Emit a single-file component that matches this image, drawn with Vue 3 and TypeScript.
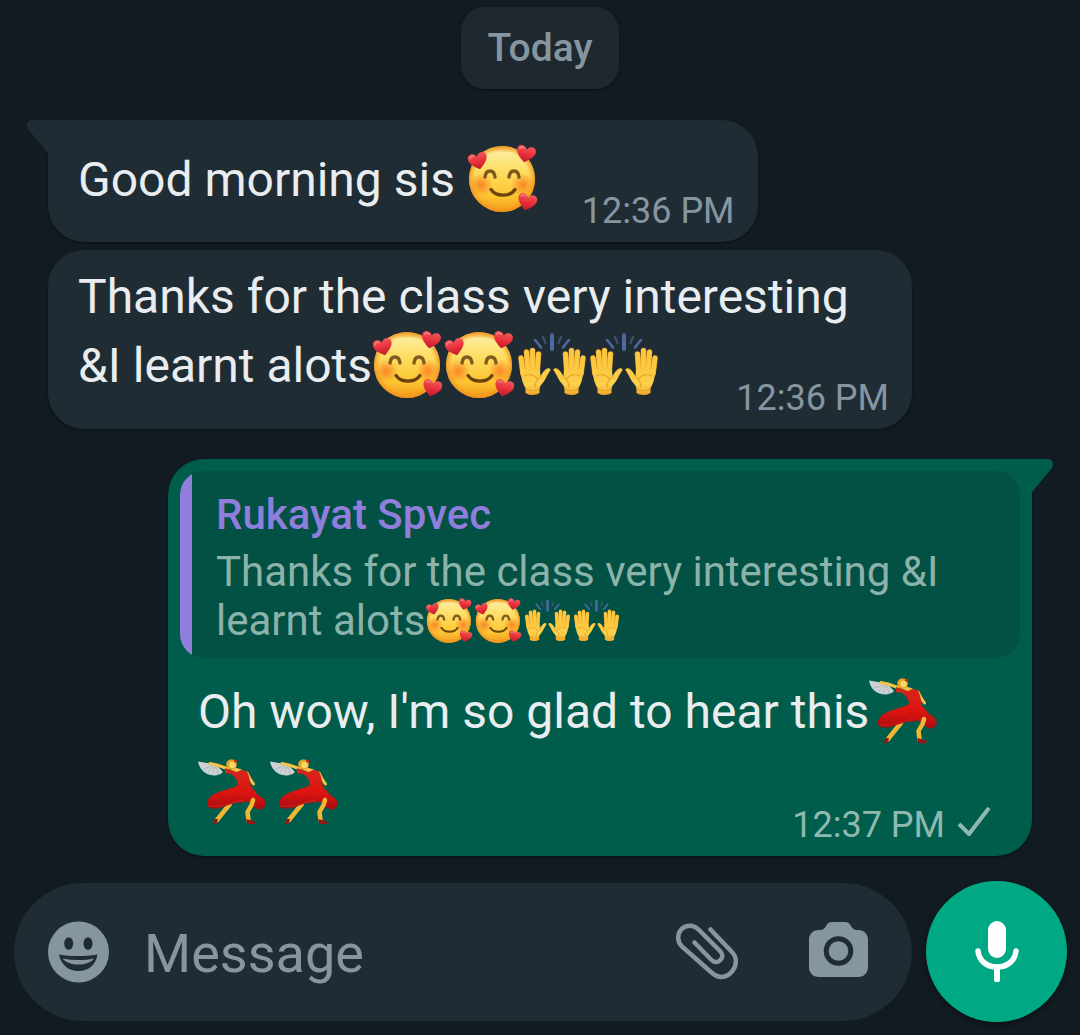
<script setup lang="ts">
import { ref } from 'vue'

type EmojiName = 'hearts' | 'hands' | 'dancer'

interface Message {
  id: number
  sent: boolean
  tail: boolean
  text: string
  emojis: EmojiName[]
  time: string
  quote?: { author: string; text: string; emojis: EmojiName[] }
}

const labels: Record<EmojiName, string> = {
  hearts: 'smiling face with hearts',
  hands: 'raising hands',
  dancer: 'woman dancing',
}

const messages: Message[] = [
  { id: 1, sent: false, tail: true, text: 'Good morning sis ', emojis: ['hearts'], time: '12:36 PM' },
  {
    id: 2,
    sent: false,
    tail: false,
    text: 'Thanks for the class very interesting &I learnt alots',
    emojis: ['hearts', 'hearts', 'hands', 'hands'],
    time: '12:36 PM',
  },
  {
    id: 3,
    sent: true,
    tail: true,
    text: "Oh wow, I'm so glad to hear this",
    emojis: ['dancer', 'dancer', 'dancer'],
    time: '12:37 PM',
    quote: {
      author: 'Rukayat Spvec',
      text: 'Thanks for the class very interesting &I learnt alots',
      emojis: ['hearts', 'hearts', 'hands', 'hands'],
    },
  },
]

const draft = ref('')
</script>

<template>
  <div class="chat">
    <svg class="defs" width="0" height="0" aria-hidden="true">
      <defs>
        <linearGradient id="skin" x1="0" y1="0" x2="0" y2="1">
          <stop offset="0" stop-color="#f9b83c" />
          <stop offset="0.1" stop-color="#fdeb9a" />
          <stop offset="0.35" stop-color="#fddf66" />
          <stop offset="0.75" stop-color="#fcc631" />
          <stop offset="1" stop-color="#f39a20" />
        </linearGradient>
        <radialGradient id="rim">
          <stop offset="0.82" stop-color="#f59b1e" stop-opacity="0" />
          <stop offset="1" stop-color="#f08c1a" stop-opacity="0.8" />
        </radialGradient>
        <radialGradient id="cheek">
          <stop offset="0" stop-color="#f9741c" stop-opacity="0.8" />
          <stop offset="1" stop-color="#f9741c" stop-opacity="0" />
        </radialGradient>
        <linearGradient id="heart-red" x1="0" y1="0" x2="0" y2="1">
          <stop offset="0" stop-color="#f2595c" />
          <stop offset="0.5" stop-color="#e8303a" />
          <stop offset="1" stop-color="#c01a2c" />
        </linearGradient>
        <linearGradient id="palm" x1="0" y1="0" x2="0" y2="1">
          <stop offset="0" stop-color="#fbc740" />
          <stop offset="0.6" stop-color="#fdd04a" />
          <stop offset="1" stop-color="#f0a72a" />
        </linearGradient>
        <linearGradient id="dress" x1="0" y1="0" x2="0" y2="1">
          <stop offset="0" stop-color="#d4281c" />
          <stop offset="0.6" stop-color="#dc1410" />
          <stop offset="1" stop-color="#a80c10" />
        </linearGradient>
      </defs>
      <symbol id="heart" viewBox="0 0 20 18">
        <path d="M10 17.500C6 14.500 0.500 10.500 0.500 5.500C0.500 0 8 -0.500 10 4.500C12 -0.500 19.500 0 19.500 5.500C19.500 10.500 14 14.500 10 17.500Z" fill="url(#heart-red)" />
        <path d="M3 5C3.500 3 5.500 2.500 7 3.500" fill="none" stroke="#f78a88" stroke-width="1.200" stroke-linecap="round" />
      </symbol>
      <symbol id="emoji-hearts" viewBox="0 0 72 72">
        <circle cx="35" cy="36" r="33" fill="url(#skin)" />
        <circle cx="35" cy="36" r="33" fill="url(#rim)" />
        <circle cx="14" cy="42" r="12" fill="url(#cheek)" />
        <circle cx="56" cy="42" r="12" fill="url(#cheek)" />
        <path d="M18 34C19 26 27 26 28 34M42 34C43 26 51 26 52 34" fill="none" stroke="#80591f" stroke-width="3.400" stroke-linecap="round" />
        <path d="M24 46.500C29 54 43 54 48 46.500" fill="none" stroke="#6b4210" stroke-width="3.200" stroke-linecap="round" />
        <use href="#heart" x="1" y="9" width="20" height="18" transform="rotate(-14 11 18)" />
        <use href="#heart" x="49" y="2" width="20" height="18" transform="rotate(12 59 10)" />
        <use href="#heart" x="50" y="50" width="20" height="18" transform="rotate(14 60 59)" />
      </symbol>
      <symbol id="hand" viewBox="0 0 36 72">
        <path d="M5 29L7 45M10.500 23L12 44M16.500 21.500V44M22.500 25L21 45" fill="none" stroke="#e09c22" stroke-width="5.600" stroke-linecap="round" />
        <path d="M5 29L7 45M10.500 23L12 44M16.500 21.500V44M22.500 25L21 45" fill="none" stroke="#fcc842" stroke-width="4.600" stroke-linecap="round" />
        <path d="M4.500 40L24 40L24.500 47C26 45 28 41 31 39.500C33.500 38.500 35.500 40 34 42C31 46 29 52 25.500 55.500C24.500 57 23.500 58 23.500 60L23.500 64C20 66.500 12.500 66.500 9.500 64L9.500 59C7 55 5 50 4.500 40Z" fill="url(#palm)" />
        <path d="M8 47C12 45 18 45 22 50M19 58C19 53 21 50 25 48M10 60C14 62 20 62 23 60" fill="none" stroke="#e5a52b" stroke-width="1.200" stroke-linecap="round" />
      </symbol>
      <symbol id="emoji-hands" viewBox="0 0 72 72">
        <g fill="none" stroke="#4c689f" stroke-linecap="round">
          <path d="M36 6V20" stroke-width="4" />
          <path d="M19 11L25 18.500M53 11L47 18.500" stroke-width="2.600" />
          <path d="M27 8L29.500 14M45 8L42.500 14" stroke="#3c5275" stroke-width="2" />
        </g>
        <use href="#hand" width="36" height="72" />
        <use href="#hand" width="36" height="72" transform="translate(72 0) scale(-1 1)" />
      </symbol>
      <symbol id="emoji-dancer" viewBox="0 0 72 72">
        <path d="M0 5.500L18 8.500L25 16C22 19.500 15 20.500 9 18C4 15.500 1 11 0 5.500Z" fill="#ccd2d4" />
        <path d="M18 9L5 13M18 9L9 17M18 9L14 19M18 9L20 19" stroke="#a9b1b5" stroke-width="0.700" />
        <path d="M12 7.500L19 9L29 12.500" fill="none" stroke="#f5c144" stroke-width="3" stroke-linecap="round" stroke-linejoin="round" />
        <path d="M49 17L51.500 22L55.500 28" fill="none" stroke="#f5c144" stroke-width="3" stroke-linecap="round" />
        <path d="M32 48L27 54L19 64" fill="none" stroke="#f2b632" stroke-width="4.500" stroke-linecap="round" />
        <path d="M27 12L35 15L45 14L49 15.500C51.500 20 52 26 53 31C57 34 58 38 63 41C69 44 69 50 64 53C61 54 58 53 55 50C52 46 49 45 45 46.500C39 46 34 48 29 49.500C21 53 12 54.500 9 49.500C8 44 13 39 20 36.500C29 32.500 37 32 40 28.500C39.500 23 36 20 33 18L27 17Z" fill="url(#dress)" />
        <path d="M55 44L53.500 49L49.500 56L50.500 64" fill="none" stroke="#f2b632" stroke-width="4.500" stroke-linecap="round" stroke-linejoin="round" />
        <path d="M20 63L19 67C17 69 14.500 68.500 15 66L17 63ZM48.500 63L54 64.500L58 66.500C59 68.500 54 68.500 49 67.500Z" fill="#9a1616" />
        <path d="M14 46C25 46 35 42 43 37" fill="none" stroke="#c01414" stroke-width="1" />
        <path d="M11 50C22 52 33 46 45 44.500" fill="none" stroke="#c9251e" stroke-width="1" />
        <path d="M35 11L44 13.500L39 16L33 14Z" fill="#f5c144" />
        <circle cx="33.500" cy="8.500" r="5.300" fill="#e8a528" />
        <circle cx="34.500" cy="9" r="3.200" fill="#fbd763" />
        <circle cx="37.500" cy="5" r="1.600" fill="#d42218" />
      </symbol>
    </svg>

    <main class="thread">
      <div class="day">Today</div>
      <article
        v-for="m in messages"
        :key="m.id"
        class="bubble"
        :class="{ sent: m.sent, received: !m.sent, tailed: m.tail, short: m.text.length < 20 }"
      >
        <svg v-if="m.tail" class="tail" viewBox="0 0 22 34" aria-hidden="true">
          <path d="M22 0H5C0 0 -1 5 1 9L21 33H22Z" fill="currentColor" />
        </svg>
        <blockquote v-if="m.quote" class="quote">
          <cite class="author">{{ m.quote.author }}</cite>
          <p class="quoted">{{ m.quote.text }}<svg v-for="(e, i) in m.quote.emojis" :key="i" class="emoji" role="img" :aria-label="labels[e]"><use :href="'#emoji-' + e" /></svg></p>
        </blockquote>
        <div class="body">
          <p class="text">{{ m.text }}<svg v-for="(e, i) in m.emojis" :key="i" class="emoji" role="img" :aria-label="labels[e]"><use :href="'#emoji-' + e" /></svg></p>
          <div class="meta">
            <time>{{ m.time }}</time>
            <svg v-if="m.sent" class="check" viewBox="0 0 34 32" role="img" aria-label="Sent">
              <path d="M2 20L12 30L32 4" fill="none" stroke="currentColor" stroke-width="4" />
            </svg>
          </div>
        </div>
      </article>
    </main>

    <form class="composer" @submit.prevent>
      <div class="field">
        <button type="button" class="icon" aria-label="Emoji">
          <svg width="62" height="62" viewBox="0 0 62 62">
            <circle cx="30.500" cy="31" r="30.500" fill="#8696a0" />
            <g fill="#1f2c34">
              <ellipse cx="20.700" cy="22.500" rx="4.500" ry="6.300" />
              <ellipse cx="40" cy="22.500" rx="4.500" ry="6.300" />
              <path d="M11 33.500C23 35.500 37 35.500 49.500 33.500C48 43.500 41 50 30.500 50C20 50 13 43.500 11 33.500Z" />
            </g>
            <path d="M14.500 37.500C25 39.500 36 39.500 46 37.500C40 45.500 21 45.500 14.500 37.500Z" fill="#8696a0" />
          </svg>
        </button>
        <input v-model="draft" class="entry" type="text" placeholder="Message" aria-label="Message" />
        <button type="button" class="icon clip" aria-label="Attach">
          <svg width="62" height="58" viewBox="0 0 62 58">
            <path d="M34.500 6.500L55.500 28.500C61 34 61.500 42 56 48.500C50 55.500 42 55.500 35.500 49.500L6 23.500C1 18.500 1 11 5.500 6C10.500 1.500 17.500 1.500 22.500 6.500L44 28C47 31 47 34.500 44.500 37C42 39.500 38.500 40 35.500 37L18.500 19.500" fill="none" stroke="#8696a0" stroke-width="4.500" stroke-linecap="round" stroke-linejoin="round" />
          </svg>
        </button>
        <button type="button" class="icon camera" aria-label="Camera">
          <svg width="59" height="55" viewBox="0 0 59 55">
            <path d="M10 8C14 8 15.500 6.500 17 4C18.500 1.500 20 0 23 0H36C39 0 40.500 1.500 42 4C43.500 6.500 45 8 49 8C55 8 59 12 59 18V45C59 51 55 55 49 55H10C4 55 0 51 0 45V18C0 12 4 8 10 8Z" fill="#8696a0" />
            <circle cx="29.500" cy="29" r="12.300" fill="none" stroke="#1f2c34" stroke-width="5" />
          </svg>
        </button>
      </div>
      <button type="button" class="mic" aria-label="Record voice message">
        <svg width="44" height="61" viewBox="0 0 44 61" fill="none">
          <rect x="13" y="0" width="18" height="37" rx="9" fill="#fff" />
          <path d="M3 30C4 40 12 46 22 46C32 46 40 40 41 30" stroke="#fff" stroke-width="5.500" stroke-linecap="round" />
          <path d="M22 46V58.500" stroke="#fff" stroke-width="6" stroke-linecap="round" />
        </svg>
      </button>
    </form>
  </div>
</template>

<style>
body {
  margin: 0;
  background: #111b21;
}
</style>

<style scoped>
.chat {
  box-sizing: border-box;
  display: flex;
  flex-direction: column;
  min-height: 100vh;
  padding: 7px 13px 13px 14px;
  background: #111b21;
  color: #e9edef;
  font-family: Roboto, sans-serif;
}

.defs {
  position: absolute;
}

.thread {
  display: flex;
  flex-direction: column;
  align-items: flex-start;
  padding: 0 35px 0 34px;
}

.day {
  align-self: center;
  box-sizing: border-box;
  padding: 18px 26px;
  margin-bottom: 31px;
  border-radius: 24px;
  background: #1f282f;
  box-shadow: 0 1px 2px #0b1014;
  color: #8696a0;
  font-size: 39px;
  font-weight: 500;
  line-height: 46px;
}

.bubble {
  position: relative;
  box-sizing: border-box;
  max-width: 864px;
  margin-bottom: 8px;
  border-radius: 36px;
  box-shadow: 0 1px 2px #0b1014;
}

.received {
  background: #1f2c34;
}

.sent {
  align-self: flex-end;
  margin-top: 22px;
  margin-bottom: 25px;
  padding-top: 12px;
  background: #005d4b;
}

.received.tailed {
  border-top-left-radius: 0;
}

.sent.tailed {
  border-top-right-radius: 0;
}

.tail {
  position: absolute;
  top: 0;
  right: 100%;
  width: 22px;
  height: 34px;
  margin-right: -1px;
  color: #1f2c34;
}

.sent .tail {
  right: auto;
  left: 100%;
  margin-right: 0;
  margin-left: -1px;
  color: #005d4b;
  transform: scaleX(-1);
}

.body {
  display: grid;
}

.text,
.meta {
  grid-area: 1 / 1;
}

.text {
  margin: 0;
  padding: 12px 30px 29px;
  font-size: 48px;
  line-height: 69px;
}

.short .body {
  grid-template-columns: auto auto;
}

.short .text {
  padding: 25px 43px 28px 30px;
}

.short .meta {
  grid-area: 1 / 2;
}

.sent .text {
  padding: 13px 30px 23px;
  line-height: 81px;
}

.emoji {
  display: inline-block;
  width: 72px;
  height: 72px;
  margin: -6px 0;
  vertical-align: -13px;
}

.meta {
  display: flex;
  gap: 12px;
  align-self: end;
  justify-self: end;
  padding: 0 23px 10px 0;
  color: #8696a0;
  font-size: 36px;
  line-height: 42px;
}

.sent .meta {
  padding-right: 41px;
  color: #8fb9b0;
}

.check {
  width: 34px;
  height: 32px;
}

.quote {
  margin: 0 12px;
  padding: 19px 24px 13px 36px;
  border-radius: 24px;
  background: linear-gradient(to right, #8f7edb 12px, #025144 12px);
  font-size: 42px;
  line-height: 49px;
}

.author {
  display: block;
  margin-bottom: 8px;
  color: #8f7edb;
  font-style: normal;
  font-weight: 500;
}

.quoted {
  margin: 0;
  color: #8cb3aa;
}

.quoted .emoji {
  width: 49px;
  height: 48px;
  vertical-align: -4px;
}

.composer {
  display: flex;
  gap: 14px;
  align-items: center;
  margin-top: auto;
}

.field {
  box-sizing: border-box;
  display: flex;
  flex: 1;
  align-items: center;
  min-width: 0;
  height: 138px;
  padding: 0 44px 0 34px;
  border-radius: 69px;
  background: #1f2c34;
}

.icon,
.mic {
  display: flex;
  flex: none;
  align-items: center;
  justify-content: center;
  padding: 0;
  border: 0;
  background: none;
}

.entry {
  flex: 1;
  min-width: 0;
  margin: 0 30px 0 34px;
  padding: 4px 0 0;
  border: 0;
  outline: 0;
  background: none;
  color: #e9edef;
  font-family: inherit;
  font-size: 54px;
  line-height: 64px;
}

.entry::placeholder {
  color: #8696a0;
  opacity: 1;
}

.clip {
  margin-right: 71px;
}

.camera {
  padding-bottom: 4px;
}

.mic {
  width: 141px;
  height: 141px;
  border-radius: 50%;
  background: #00a884;
  box-shadow: 0 2px 4px #0b1014;
}
</style>
